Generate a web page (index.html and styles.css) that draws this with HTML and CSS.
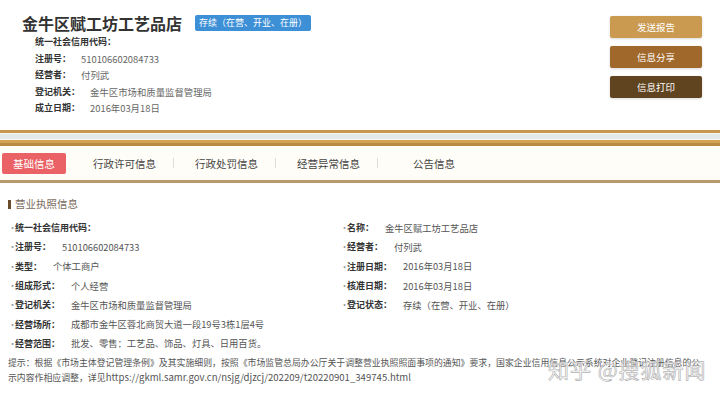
FILE: index.html
```html
<!DOCTYPE html>
<html lang="zh-CN">
<head>
    <meta charset="UTF-8">
    <meta name="viewport" content="width=device-width, initial-scale=1.0">
    <title>金牛区赋工坊工艺品店</title>
    <link rel="stylesheet" href="styles.css">
</head>
<body>
    <div class="top">
        <div class="info">
            <div class="title-row">
                <h1>金牛区赋工坊工艺品店</h1>
                <span class="badge">存续（在营、开业、在册）</span>
            </div>
            <ul class="brief">
                <li><b>统一社会信用代码：</b></li>
                <li><b>注册号：</b><span>510106602084733</span></li>
                <li><b>经营者：</b><span>付列武</span></li>
                <li><b>登记机关：</b><span>金牛区市场和质量监督管理局</span></li>
                <li><b>成立日期：</b><span>2016年03月18日</span></li>
            </ul>
        </div>
        <div class="actions">
            <button class="btn btn-report">发送报告</button>
            <button class="btn btn-share">信息分享</button>
            <button class="btn btn-print">信息打印</button>
        </div>
    </div>

    <div class="rules"></div>

    <nav class="tabs">
        <span class="tab-active">基础信息</span>
        <span class="tab">行政许可信息</span>
        <i class="sep"></i>
        <span class="tab">行政处罚信息</span>
        <i class="sep"></i>
        <span class="tab">经营异常信息</span>
        <i class="sep"></i>
        <span class="tab tab-last">公告信息</span>
    </nav>
    <div class="rule-bottom"></div>

    <section class="license">
        <h2>营业执照信息</h2>
        <div class="fields">
            <div class="field"><b>统一社会信用代码：</b></div>
            <div class="field"><b>名称：</b><span>金牛区赋工坊工艺品店</span></div>
            <div class="field"><b>注册号：</b><span>510106602084733</span></div>
            <div class="field"><b>经营者：</b><span>付列武</span></div>
            <div class="field"><b>类型：</b><span>个体工商户</span></div>
            <div class="field"><b>注册日期：</b><span>2016年03月18日</span></div>
            <div class="field"><b>组成形式：</b><span>个人经营</span></div>
            <div class="field"><b>核准日期：</b><span>2016年03月18日</span></div>
            <div class="field"><b>登记机关：</b><span>金牛区市场和质量监督管理局</span></div>
            <div class="field"><b>登记状态：</b><span>存续（在营、开业、在册）</span></div>
            <div class="field wide"><b>经营场所：</b><span>成都市金牛区蓉北商贸大道一段19号3栋1层4号</span></div>
            <div class="field wide"><b>经营范围：</b><span>批发、零售：工艺品、饰品、灯具、日用百货。</span></div>
        </div>
        <p class="note">提示：根据《市场主体登记管理条例》及其实施细则，按照《市场监管总局办公厅关于调整营业执照照面事项的通知》要求，国家企业信用信息公示系统对企业登记注册信息的公<br>示内容作相应调整，详见<span class="url">https://gkml.samr.gov.cn/nsjg/djzcj/202209/t20220901_349745.html</span></p>
    </section>

    <div class="watermark">知乎 @搜狐新闻</div>
</body>
</html>
```

FILE: styles.css
```css
body {
    margin: 0;
    font-family: "Noto Sans CJK SC", "Noto Sans", sans-serif;
    background-color: #fff;
    color: #333;
    position: relative;
    overflow: hidden;
}
.top {
    display: flex;
    justify-content: space-between;
    padding: 12px 18px 13px 22px;
    height: 105px;
}
.title-row {
    display: flex;
    align-items: center;
    gap: 13px;
}
h1 {
    margin: 0;
    font-size: 16px;
    line-height: 22px;
    font-weight: 700;
    color: #333;
}
.badge {
    background-color: #3d8fd6;
    color: #fff;
    font-size: 9px;
    line-height: 16px;
    padding: 0 4px;
    border-radius: 2px;
}
.brief {
    list-style: none;
    margin: 0;
    padding: 0 0 0 13px;
}
.brief li {
    font-size: 9px;
    line-height: 16.5px;
    display: flex;
    gap: 10px;
}
.brief b {
    color: #333;
}
.brief span {
    color: #666;
    font-size: 9.4px;
}
.actions {
    display: flex;
    flex-direction: column;
    gap: 8px;
    padding-top: 4px;
}
.btn {
    width: 92px;
    height: 22px;
    border: none;
    border-radius: 2px;
    color: #fff;
    font-family: inherit;
    font-size: 9.5px;
    box-shadow: 0 1px 3px rgba(0, 0, 0, 0.15);
}
.btn-report {
    background-color: #c99a4f;
}
.btn-share {
    background-color: #a0682a;
}
.btn-print {
    background-color: #604420;
}
.rules {
    height: 16px;
    background: linear-gradient(#c8964f 0 3px, #f7f8f3 3px 4px, #e3e9e9 4px 9px, #f7f8f3 9px 10px, #d3a257 10px 13px, #b98945 13px 16px);
}
.tabs {
    display: flex;
    align-items: center;
    height: 34px;
    padding-left: 2px;
    background-color: #fffdf7;
    font-size: 10.5px;
    color: #444;
}
.tab-active {
    width: 64px;
    height: 21px;
    line-height: 21px;
    text-align: center;
    margin-right: 6px;
    background-color: #ea6166;
    color: #fff;
    border-radius: 2px;
}
.tab {
    padding: 0 17px 0 21px;
}
.tab-last {
    padding-left: 35px;
}
.sep {
    width: 1px;
    height: 10px;
    background-color: #ddd;
}
.rule-bottom {
    height: 3px;
    background-color: #b8996b;
}
.license {
    padding: 14px 0 0 8px;
}
h2 {
    margin: 0;
    display: flex;
    align-items: center;
    gap: 4px;
    font-size: 10.5px;
    line-height: 14px;
    font-weight: 400;
    color: #7a6a5c;
}
h2::before {
    content: "";
    width: 3px;
    height: 9px;
    background-color: #6a4b2b;
}
.fields {
    display: grid;
    grid-template-columns: 332px 1fr;
    grid-auto-rows: 19.3px;
    margin-top: 7px;
}
.field {
    display: flex;
    align-items: center;
    gap: 11px;
    font-size: 9px;
}
.field::before {
    content: "·";
    width: 7px;
    margin-right: -11px;
    color: #999;
}
.field b {
    color: #333;
}
.field span {
    color: #555;
    font-size: 9.3px;
}
.wide {
    grid-column: span 2;
}
.note {
    margin: 2px 0 0;
    font-size: 8.9px;
    line-height: 15px;
    color: #555;
    white-space: nowrap;
}
.url {
    font-size: 9.6px;
}
.watermark {
    position: absolute;
    left: 548px;
    top: 354px;
    font-size: 21px;
    letter-spacing: 1px;
    color: rgba(255, 255, 255, 0.65);
    -webkit-text-stroke: 0.7px #b5b5b5;
}
```
